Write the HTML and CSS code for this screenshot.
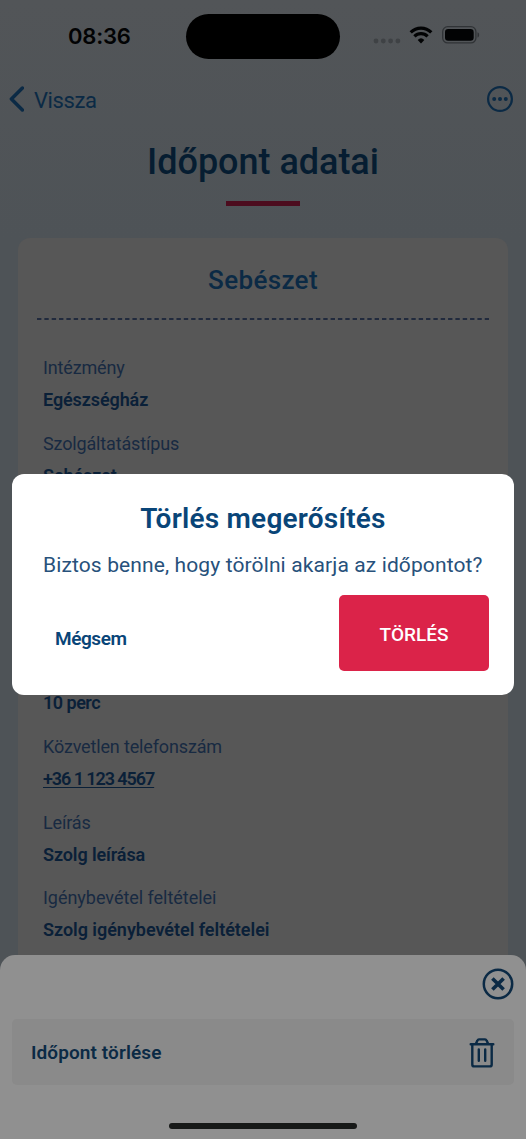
FILE: index.html
```html
<!DOCTYPE html>
<html lang="hu">
<head>
<meta charset="utf-8">
<meta name="viewport" content="width=device-width">
<title>Időpont adatai</title>
<link rel="stylesheet" href="styles.css">
</head>
<body>
<div class="screen">
  <header class="status">
    <span class="clock">08:36</span>
    <span class="island"></span>
    <span class="indicators">
      <svg class="signal" width="28" height="6" viewBox="0 0 28 6"><circle cx="3" cy="3" r="2.4"/><circle cx="10.3" cy="3" r="2.4"/><circle cx="17.6" cy="3" r="2.4"/><circle cx="24.9" cy="3" r="2.4"/></svg>
      <svg class="wifi" width="24" height="18" viewBox="0 0 24 18"><path d="M1.7 6.4a14.6 14.6 0 0 1 20.6 0M5.4 10.4a9.4 9.4 0 0 1 13.2 0" fill="none" stroke="#020304" stroke-width="3.2"/><path d="M12 17.4l-3.3-3.5a4.8 4.8 0 0 1 6.6 0z" fill="#020304"/></svg>
      <svg class="battery" width="38" height="18" viewBox="0 0 38 18"><rect x=".7" y=".7" width="33.2" height="16.2" rx="5" fill="none" stroke="#303336" stroke-width="1.3"/><rect x="3" y="3" width="28.7" height="11.7" rx="3.2" fill="#020304"/><path d="M35.5 6.2c2.2.7 2.2 4.6 0 5.3z" fill="#303336"/></svg>
    </span>
  </header>
  <nav class="nav">
    <a class="back"><svg width="16" height="26" viewBox="0 0 16 26"><path d="M14.4 2L3.4 13l11 11" fill="none" stroke="#0b2a45" stroke-width="3.5" stroke-linecap="round" stroke-linejoin="round"/></svg><span>Vissza</span></a>
    <svg width="28" height="28" viewBox="0 0 28 28"><circle cx="14" cy="14" r="11.9" fill="none" stroke="#0b2a45" stroke-width="2.2"/><g fill="#0b2a45"><circle cx="8.2" cy="14" r="2"/><circle cx="14" cy="14" r="2"/><circle cx="19.8" cy="14" r="2"/></g></svg>
  </nav>
  <h1 class="title">Időpont adatai</h1>
  <div class="accent"></div>
  <main class="card">
    <h2 class="card-title">Sebészet</h2>
    <svg class="divider" width="452" height="2" viewBox="0 0 452 2"><path d="M0 1H452" stroke="#101d36" stroke-width="1.4" stroke-dasharray="4.4 2.94"/></svg>
    <div class="fields">
      <div class="field"><p class="label">Intézmény</p><p class="value">Egészségház</p></div>
      <div class="field"><p class="label">Szolgáltatástípus</p><p class="value">Sebészet</p></div>
      <div class="field duration"><p class="value">10 perc</p></div>
      <div class="field"><p class="label">Közvetlen telefonszám</p><p class="value phone"><span>+36 1 123 4567</span></p></div>
      <div class="field"><p class="label">Leírás</p><p class="value">Szolg leírása</p></div>
      <div class="field"><p class="label terms">Igénybevétel feltételei</p><p class="value terms">Szolg igénybevétel feltételei</p></div>
    </div>
  </main>
  <section class="sheet">
    <div class="sheet-head"><svg width="32" height="32" viewBox="0 0 32 32" fill="none" stroke="#0b2a45"><circle cx="16" cy="16" r="14.2" stroke-width="2.5"/><path d="M10.4 10.4l11.2 11.2M21.6 10.4L10.4 21.6" stroke-width="3.6"/></svg></div>
    <div class="action"><span>Időpont törlése</span><svg width="26" height="30" viewBox="0 0 26 30" fill="none" stroke="#0b2a45" stroke-width="2.4" stroke-linejoin="round" stroke-linecap="round"><path d="M1.7 6.2h22.6M3.3 6.2v20.2q0 2 2 2h15.4q2 0 2-2V6.2M6.8 6l1.6-3.4q.5-1.2 1.6-1.2h6q1.100 0 1.6 1.2L19.200 6M9.800 11.500v11.200M16.200 11.500v11.200"/></svg></div>
    <div class="home"></div>
  </section>
  <section class="dialog">
    <h2>Törlés megerősítés</h2>
    <p>Biztos benne, hogy törölni akarja az időpontot?</p>
    <div class="buttons"><button class="cancel">Mégsem</button><button class="delete">TÖRLÉS</button></div>
  </section>
</div>
</body>
</html>
```
FILE: styles.css
```css
* { box-sizing: border-box; }
body { margin: 0; font-family: Roboto, sans-serif; color: #0b2a45; background: #505457; }
h1, h2, p { margin: 0; font-weight: 500; white-space: nowrap; }
svg { display: block; flex: none; }
button { border: 0; background: none; padding: 0; font-family: inherit; }
.screen { position: relative; width: 526px; height: 1139px; overflow: hidden; background: linear-gradient(#525558, #4e5357 240px, #4e5357); }
.status { height: 72px; padding: 14px 0 0 68px; display: flex; align-items: flex-start; }
.clock { width: 118px; font: 600 22px/44px Inter, sans-serif; color: #020304; letter-spacing: -.2px; }
.island { width: 154px; height: 45px; border-radius: 23px; background: #000; }
.indicators { display: flex; margin-left: 33px; padding-top: 12px; }
.signal { fill: #3f4245; margin: 12px 8px 0 0; }
.wifi { margin-right: 9px; }
.nav { height: 56px; padding: 0 12px 2px 8px; display: flex; justify-content: space-between; align-items: center; }
.back { display: flex; align-items: center; gap: 10px; font-size: 22px; letter-spacing: -.4px; }
.back span { padding-top: 3px; }
.title { height: 68px; text-align: center; font-size: 36px; line-height: 69px; letter-spacing: -.03px; color: #061d31; }
.accent { width: 74px; height: 5px; margin: 5px auto 0 226px; background: #4c0c1e; }
.card { width: 490px; height: 740px; margin: 32px 0 0 18px; border-radius: 12px; background: #575757; padding-top: 19px; }
.card-title { text-align: center; font-size: 26px; line-height: 46px; letter-spacing: .35px; }
.divider { margin: 15px 0 0 19px; }
.fields { padding: 32px 0 0 25px; }
.field { margin-bottom: 12.75px; }
.label { font-size: 18px; line-height: 32px; font-weight: 400; color: #182a42; letter-spacing: -.15px; }
.value { font-size: 18px; line-height: 31px; font-weight: 600; color: #0a2038; letter-spacing: -.1px; }
.label.terms, .value.terms { letter-spacing: -.03px; }
.duration { margin-top: 196.25px; }
.duration .value { letter-spacing: -.5px; }
.value.phone { letter-spacing: -1.07px; }
.phone span { text-decoration: underline; text-decoration-thickness: 1.3px; text-underline-offset: 2px; }
.sheet { position: absolute; left: 0; right: 0; bottom: 0; height: 184px; padding: 13px 12px 0; border-radius: 15px 15px 0 0; background: #909090; }
.sheet-head { height: 51px; display: flex; justify-content: flex-end; }
.action { height: 66px; padding: 1px 19px 0; border-radius: 5px; background: #8a8a8a; display: flex; align-items: center; justify-content: space-between; font-size: 19px; font-weight: 600; letter-spacing: .1px; }
.home { width: 188px; height: 6px; margin: 38px 0 0 157px; border-radius: 3px; background: #171918; }
.dialog { position: absolute; left: 12px; top: 474px; width: 502px; height: 221px; padding: 22px 25px 0 31px; border-radius: 12px; background: #fff; color: #094578; }
.dialog h2 { margin-left: -6px; text-align: center; font-size: 28px; line-height: 45px; font-weight: 600; letter-spacing: .23px; }
.dialog p { font-size: 21px; line-height: 34px; margin-top: 7px; font-weight: 400; color: #27517b; letter-spacing: .12px; }
.buttons { display: flex; justify-content: space-between; margin-top: 13px; }
.cancel { height: 76px; padding: 10px 0 0 12px; font-size: 19px; font-weight: 600; color: #094578; letter-spacing: -.45px; }
.delete { width: 150px; height: 76px; padding-top: 3px; border-radius: 5px; background: #db2349; color: #fff; font-size: 19px; font-weight: 500; }
```
